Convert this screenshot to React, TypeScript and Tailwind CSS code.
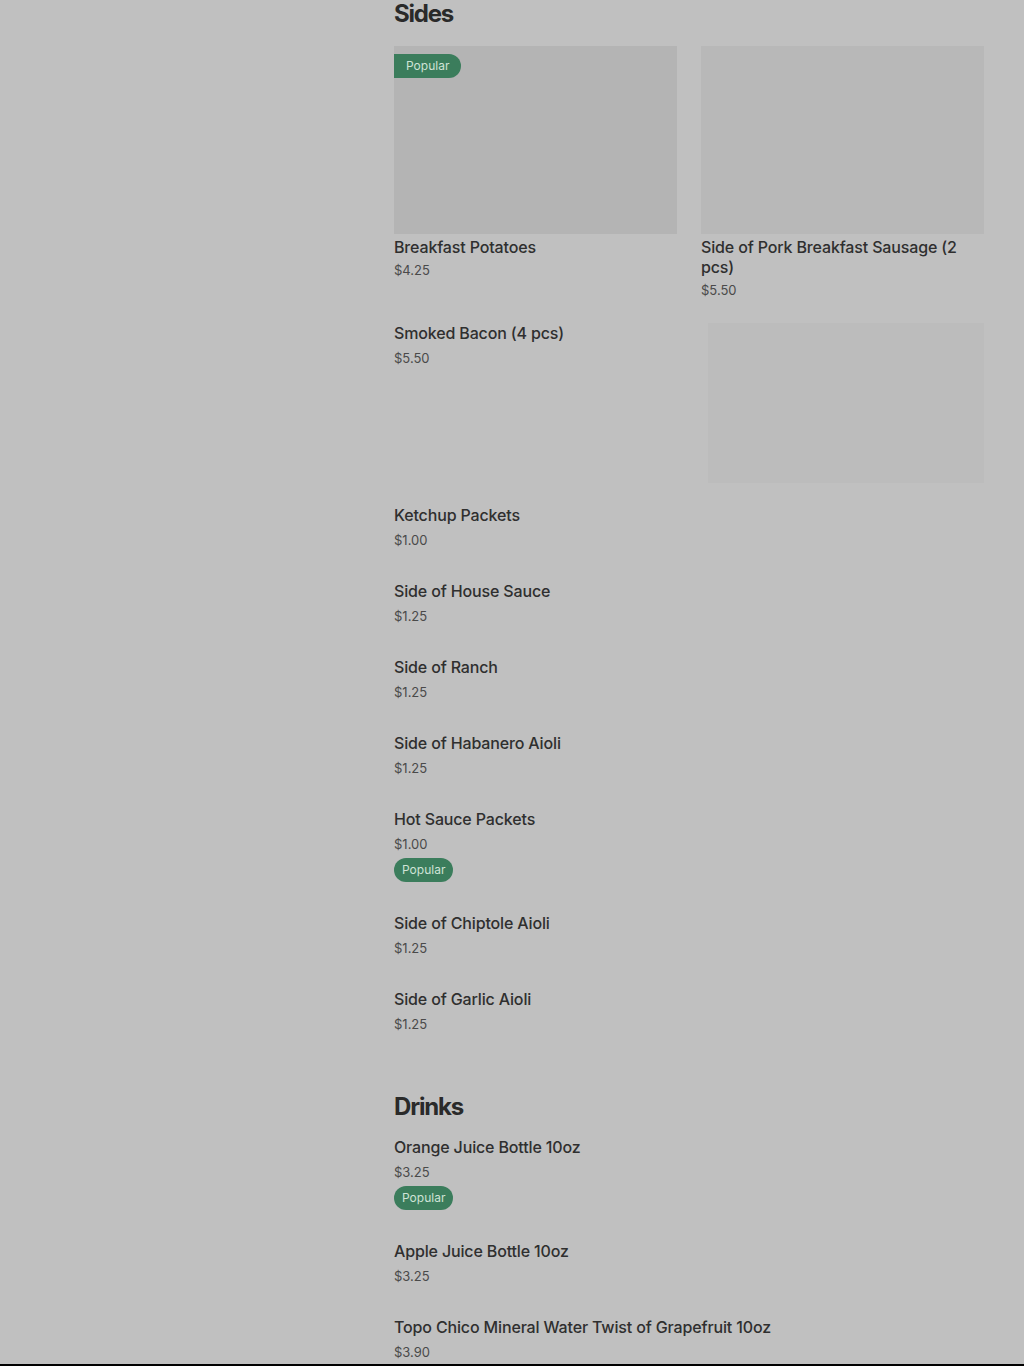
type Item = { name: string; price: string; popular?: boolean };

const cards: Item[] = [
  { name: "Breakfast Potatoes", price: "$4.25", popular: true },
  { name: "Side of Pork Breakfast Sausage (2 pcs)", price: "$5.50" },
];

const sides: Item[] = [
  { name: "Ketchup Packets", price: "$1.00" },
  { name: "Side of House Sauce", price: "$1.25" },
  { name: "Side of Ranch", price: "$1.25" },
  { name: "Side of Habanero Aioli", price: "$1.25" },
  { name: "Hot Sauce Packets", price: "$1.00", popular: true },
  { name: "Side of Chiptole Aioli", price: "$1.25" },
  { name: "Side of Garlic Aioli", price: "$1.25" },
];

const drinks: Item[] = [
  { name: "Orange Juice Bottle 10oz", price: "$3.25", popular: true },
  { name: "Apple Juice Bottle 10oz", price: "$3.25" },
  { name: "Topo Chico Mineral Water Twist of Grapefruit 10oz", price: "$3.90" },
];

function Badge({ onImage }: { onImage?: boolean }) {
  return (
    <span
      className={
        onImage
          ? "flex h-6 items-center rounded-r-full bg-[#3b7d5c] px-3 text-xs text-[#cfe3d6]"
          : "flex h-6 items-center rounded-full bg-[#3b7d5c] px-2 text-xs text-[#cfe3d6]"
      }
    >
      Popular
    </span>
  );
}

function Row({ item }: { item: Item }) {
  return (
    <div className="pt-4 pb-[15px]">
      <div className="text-base leading-5 font-medium tracking-[-0.15px] text-[#2f2f2f]">{item.name}</div>
      <div className="mt-[5px] text-[13px] leading-5 text-[#4a4a4a]">{item.price}</div>
      {item.popular && (
        <div className="mt-1 flex">
          <Badge />
        </div>
      )}
    </div>
  );
}

export default function App() {
  return (
    <div
      className="flex h-[1366px] flex-col overflow-hidden bg-[#c0c0c0]"
      style={{ fontFamily: "Inter, 'Noto Sans', sans-serif" }}
    >
      <main className="flex-1 overflow-hidden pl-[394px] pr-10">
        <h2 className="-mt-[2px] text-2xl leading-8 font-bold tracking-tighter text-[#2a2a2a]">Sides</h2>

        <div className="mt-4 grid grid-cols-2 gap-x-6">
          {cards.map((c, i) => (
            <div key={c.name}>
              <div
                className={
                  i === 0
                    ? "flex h-[188px] items-start bg-[#b4b4b4] pt-2"
                    : "flex h-[188px] items-start bg-[#b8b8b8] pt-2"
                }
              >
                {c.popular && <Badge onImage />}
              </div>
              <div className="mt-[3px] text-base leading-5 font-medium tracking-[-0.15px] text-[#2f2f2f]">{c.name}</div>
              <div className="mt-[3px] text-[13px] leading-5 text-[#4a4a4a]">{c.price}</div>
            </div>
          ))}
        </div>

        <div className="mt-[7px] flex justify-between pt-4 pb-[6px]">
          <div>
            <div className="text-base leading-5 font-medium tracking-[-0.15px] text-[#2f2f2f]">Smoked Bacon (4 pcs)</div>
            <div className="mt-[5px] text-[13px] leading-5 text-[#4a4a4a]">$5.50</div>
          </div>
          <div className="h-[160px] w-[276px] bg-[#bcbcbc]" />
        </div>

        {sides.map((s) => (
          <Row key={s.name} item={s} />
        ))}

        <h2 className="mt-[42px] text-2xl leading-8 font-bold tracking-tighter text-[#2a2a2a]">Drinks</h2>
        <div className="-mt-[2px]">
          {drinks.map((d) => (
            <Row key={d.name} item={d} />
          ))}
        </div>
      </main>
      <div className="h-[2px] bg-black" />
    </div>
  );
}
